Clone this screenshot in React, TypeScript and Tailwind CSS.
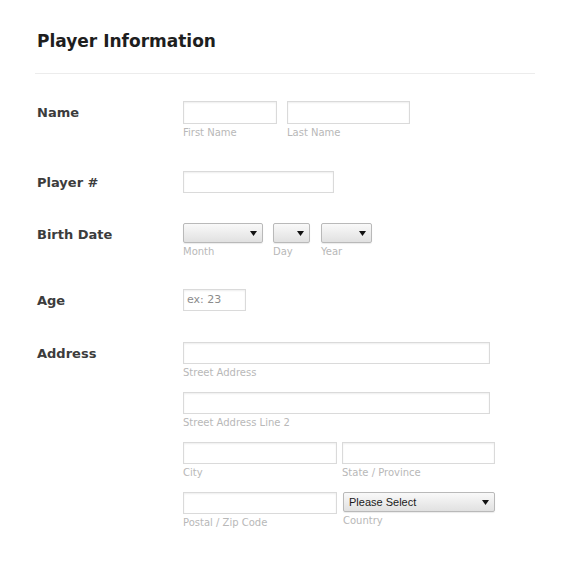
import React from 'react';

const labelFont = { fontFamily: '"DejaVu Sans", Verdana, sans-serif' };

function Arrow() {
  return (
    <svg width="7" height="5" viewBox="0 0 7 5" className="shrink-0">
      <polygon points="0,0 7,0 3.5,5" fill="#111" />
    </svg>
  );
}

function TextBox({ w, h = 'h-[22px]', placeholder }: { w: string; h?: string; placeholder?: string }) {
  return (
    <div
      className={`${w} ${h} border border-[#dadada] bg-white shadow-[inset_0_1px_2px_rgba(0,0,0,0.07)] flex items-center pl-[3px] text-[11px] text-[#8c8c8c]`}
      style={labelFont}
    >
      {placeholder}
    </div>
  );
}

function SelectBox({ w, text }: { w: string; text?: string }) {
  return (
    <div
      className={`${w} h-[20px] border border-[#b9b9b9] rounded-[2px] bg-linear-to-b from-[#f9f9f9] to-[#e1e1e1] shadow-[0_1px_1px_rgba(0,0,0,0.08)] flex items-center justify-between pl-[5px] pr-[5px]`}
    >
      <span className="text-[11px] text-[#1a1a1a] font-['Liberation_Sans',Arial,sans-serif]">{text}</span>
      <Arrow />
    </div>
  );
}

function Sub({ children }: { children: React.ReactNode }) {
  return (
    <div className="mt-[2px] text-[10px] leading-[13px] text-[#b8b8b8]" style={labelFont}>
      {children}
    </div>
  );
}

function Row({ label, className, children }: { label: string; className: string; children: React.ReactNode }) {
  return (
    <div className={`flex ${className}`}>
      <div className="w-[146px] shrink-0 text-[13px] leading-[23px] font-bold text-[#3c3c3c]" style={labelFont}>
        {label}
      </div>
      <div>{children}</div>
    </div>
  );
}

export default function App() {
  return (
    <div className="w-[568px] h-[562px] bg-white pl-[37px] pt-[31px]">
      <h1 className="text-[17px] leading-[20px] font-bold text-[#1e1e1e]" style={labelFont}>
        Player Information
      </h1>
      <div className="mt-[22px] -ml-[2px] w-[500px] h-px bg-[#ececec]" />

      <Row label="Name" className="mt-[27px]">
        <div className="flex gap-[10px]">
          <div>
            <TextBox w="w-[94px]" h="h-[23px]" />
            <Sub>First Name</Sub>
          </div>
          <div>
            <TextBox w="w-[123px]" h="h-[23px]" />
            <Sub>Last Name</Sub>
          </div>
        </div>
      </Row>

      <Row label="Player #" className="mt-[32px]">
        <TextBox w="w-[151px]" />
      </Row>

      <Row label="Birth Date" className="mt-[29px]">
        <div className="flex">
          <div>
            <SelectBox w="w-[80px]" />
            <Sub>Month</Sub>
          </div>
          <div className="ml-[10px]">
            <SelectBox w="w-[37px]" />
            <Sub>Day</Sub>
          </div>
          <div className="ml-[11px]">
            <SelectBox w="w-[51px]" />
            <Sub>Year</Sub>
          </div>
        </div>
      </Row>

      <Row label="Age" className="mt-[31px]">
        <TextBox w="w-[63px]" placeholder="ex: 23" />
      </Row>

      <Row label="Address" className="mt-[30px]">
        <div className="flex flex-col gap-[13px]">
          <div>
            <TextBox w="w-[307px]" />
            <Sub>Street Address</Sub>
          </div>
          <div>
            <TextBox w="w-[307px]" />
            <Sub>Street Address Line 2</Sub>
          </div>
          <div className="flex gap-[5px]">
            <div>
              <TextBox w="w-[154px]" />
              <Sub>City</Sub>
            </div>
            <div>
              <TextBox w="w-[153px]" />
              <Sub>State / Province</Sub>
            </div>
          </div>
          <div className="flex gap-[6px]">
            <div>
              <TextBox w="w-[154px]" />
              <Sub>Postal / Zip Code</Sub>
            </div>
            <div>
              <SelectBox w="w-[152px]" text="Please Select" />
              <Sub>Country</Sub>
            </div>
          </div>
        </div>
      </Row>
    </div>
  );
}
